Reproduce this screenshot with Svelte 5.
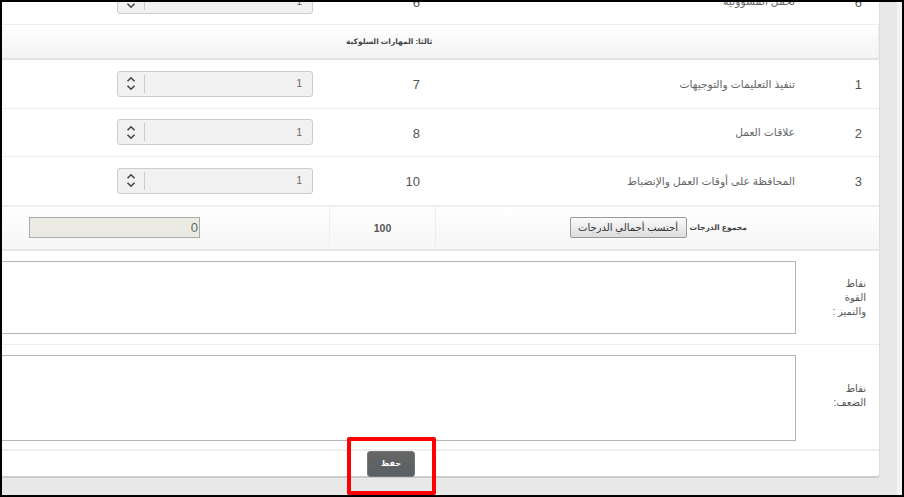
<script>
  const rows = [
    { n: 1, max: 7, name: 'تنفيذ التعليمات والتوجيهات' },
    { n: 2, max: 8, name: 'علاقات العمل' },
    { n: 3, max: 10, name: 'المحافظة على أوقات العمل والإنضباط' }
  ];
</script>

<div class="frame">
  <div class="page">
    <div class="panel">
      <div class="row clipped">
        <div class="field"><div class="spin"><span class="arrows"><svg width="10" height="15" viewBox="0 0 10 15"><path d="M1.5 5.2 5 1.8l3.5 3.4M1.5 9.8 5 13.2l3.5-3.4" /></svg></span><span class="val">1</span></div></div>
        <div class="max">6</div>
        <div class="name">تحمل المسؤولية</div>
        <div class="idx">6</div>
      </div>
      <div class="section"><span>ثالثا: المهارات السلوكية</span></div>
      {#each rows as r}
        <div class="row">
          <div class="field"><div class="spin"><span class="arrows"><svg width="10" height="15" viewBox="0 0 10 15"><path d="M1.5 5.2 5 1.8l3.5 3.4M1.5 9.8 5 13.2l3.5-3.4" /></svg></span><span class="val">1</span></div></div>
          <div class="max">{r.max}</div>
          <div class="name">{r.name}</div>
          <div class="idx">{r.n}</div>
        </div>
      {/each}
      <div class="total">
        <div class="tfield"><div class="sum">0</div></div>
        <div class="tmax">100</div>
        <div class="tlabel"><span class="tl">مجموع الدرجات</span><button class="calc">أحتسب أجمالي الدرجات</button></div>
      </div>
      <div class="note first">
        <div class="box"></div>
        <div class="lbl">نقاط<br />القوة<br />والتميز :</div>
      </div>
      <div class="note second">
        <div class="box"></div>
        <div class="lbl">نقاط<br />الضعف:</div>
      </div>
      <div class="foot"><button class="save">حفظ</button></div>
    </div>
    <div class="track"></div>
  </div>
  <div class="mark"></div>
</div>

<style>
  :global(body) { margin: 0; background: #000; }
  .frame {
    position: relative;
    width: 904px;
    height: 497px;
    box-sizing: border-box;
    padding: 2px;
    background: #000;
    overflow: hidden;
    font-family: "Liberation Sans", "DejaVu Sans", sans-serif;
    color: #555;
  }
  .page {
    display: flex;
    height: 493px;
    background: #e8e8e8;
    justify-content: space-between;
  }
  .panel {
    width: 878px;
    height: 476px;
    box-sizing: border-box;
    background: #fff;
    border-bottom: 2px solid #ccc;
    border-right: 1px solid #ddd;
    border-bottom-right-radius: 4px;
    display: flex;
    flex-direction: column;
  }
  .track { width: 5px; background: #f3f3f3; }
  .row {
    display: grid;
    grid-template-columns: 328px 106px 1fr 76px;
    height: 48.5px;
    box-sizing: border-box;
    border-bottom: 1px solid #eee;
    align-items: center;
    flex: none;
  }
  .row.clipped {
    height: 23px;
    align-content: end;
    overflow: hidden;
    padding-bottom: 10px;
  }
  .field { display: flex; justify-content: flex-end; padding-right: 17px; }
  .spin {
    width: 196px;
    height: 26px;
    box-sizing: border-box;
    display: flex;
    align-items: center;
    background: #f1f1f1;
    border: 1px solid #ccc;
    border-radius: 3px;
  }
  .arrows {
    width: 26px;
    height: 18px;
    display: flex;
    align-items: center;
    justify-content: center;
    border-right: 1px solid #ccc;
  }
  .arrows path { fill: none; stroke: #444; stroke-width: 1.6; }
  .val { flex: 1; text-align: right; padding-right: 10px; font-size: 10px; color: #666; }
  .max { font-size: 13px; text-align: right; padding: 2px 16px 0 0; color: #555; }
  .name { font-size: 10.7px; color: #666; direction: rtl; padding: 1px 8px 0 0; text-align: start; }
  .idx { font-size: 13px; text-align: right; padding: 2px 17px 0 0; color: #555; }
  .section {
    height: 35px;
    flex: none;
    box-sizing: border-box;
    background: linear-gradient(#fff, #f3f3f3);
    border-bottom: 2px solid #e2e2e2;
    border-right: 1px solid #eee;
    display: flex;
    align-items: center;
    padding-left: 344px;
    font-size: 7.5px;
    font-weight: bold;
    color: #444;
  }
  .section span { direction: rtl; }
  .total {
    display: grid;
    grid-template-columns: 328px 106px 1fr;
    height: 45.5px;
    flex: none;
    box-sizing: border-box;
    background: linear-gradient(#fff, #f6f6f6);
    border-top: 1px solid #eee;
    border-bottom: 2px solid #e6e6e6;
  }
  .total > * { display: flex; align-items: center; }
  .tfield { padding-left: 27px; border-right: 1px solid #eee; }
  .tmax { justify-content: center; font-size: 10.5px; font-weight: bold; color: #555; border-right: 1px solid #eee; }
  .tlabel { gap: 3px; flex-direction: row-reverse; justify-content: flex-start; padding-right: 132px; }
  .tl { font-size: 7.6px; font-weight: bold; color: #444; direction: rtl; }
  .sum {
    width: 171px;
    height: 21px;
    box-sizing: border-box;
    background: #ebebe4;
    border: 1px solid #aaa;
    text-align: right;
    padding-right: 1px;
    font-size: 13px;
    line-height: 19px;
    color: #666;
  }
  .calc {
    width: 117px;
    height: 21px;
    padding: 0;
    box-sizing: border-box;
    font: 10px "Liberation Sans", "DejaVu Sans", sans-serif;
    color: #333;
    background: linear-gradient(#fafafa, #ddd);
    border: 1px solid #999;
    border-radius: 2px;
    direction: rtl;
  }
  .note {
    display: grid;
    grid-template-columns: 794px 1fr;
    box-sizing: border-box;
    border-bottom: 1px solid #eee;
    padding-top: 10px;
    flex: none;
  }
  .note.first { height: 94px; }
  .note.second { height: 106px; border-bottom-width: 2px; }
  .box {
    box-sizing: border-box;
    background: #fff;
    border: 1px solid #b5b5b5;
    border-left: 0;
  }
  .first .box { height: 73px; }
  .second .box { height: 86px; }
  .lbl {
    font-size: 10px;
    line-height: 14px;
    direction: rtl;
    text-align: start;
    padding-right: 13px;
    color: #555;
    align-self: start;
  }
  .first .lbl { padding-top: 16px; }
  .second .lbl { padding-top: 27px; }
  .foot { flex: 1; display: flex; align-items: flex-start; padding-left: 365px; }
  .save {
    width: 48px;
    height: 26px;
    padding: 0 0 2px;
    border: 1px solid #777;
    border-radius: 3px;
    background: linear-gradient(#666, #5a5f63);
    color: #fff;
    font: bold 8px "Liberation Sans", "DejaVu Sans", sans-serif;
  }
  .mark {
    position: absolute;
    left: 347px;
    top: 437px;
    width: 89px;
    height: 58px;
    box-sizing: border-box;
    border: 4px solid #f00;
    border-radius: 2px;
  }
</style>
